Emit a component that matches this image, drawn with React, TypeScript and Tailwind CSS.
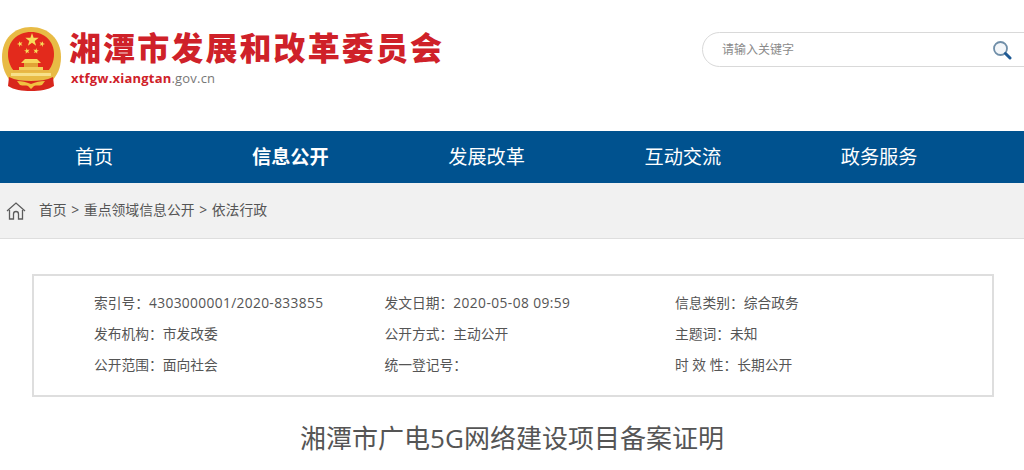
import React from 'react';

const font = { fontFamily: '"Open Sans", "Noto Sans CJK SC", sans-serif' };

// five pointed star as polygon points
function star(cx: number, cy: number, r: number, rot = 0) {
  const pts: string[] = [];
  for (let i = 0; i < 10; i++) {
    const rad = i % 2 === 0 ? r : r * 0.4;
    const a = ((i * 36 - 90 + rot) * Math.PI) / 180;
    pts.push(`${(cx + rad * Math.cos(a)).toFixed(1)},${(cy + rad * Math.sin(a)).toFixed(1)}`);
  }
  return pts.join(' ');
}

function Emblem() {
  return (
    <svg width="62" height="68" viewBox="0 0 62 68" className="shrink-0">
      <defs>
        <filter id="soft"><feGaussianBlur stdDeviation="0.5" /></filter>
      </defs>
      <g filter="url(#soft)">
        <path d="M31 2C14 2 2 14 2 32c0 11 4 19 9 25l40 0c6-6 10-14 10-25C61 14 48 2 31 2z" fill="#e8bb45" />
        <path d="M31 7C17 7 8 17 8 29c0 8 3 14 7 18h32c4-4 7-10 7-18C54 17 45 7 31 7z" fill="#e32a1b" />
        <polygon points={star(32, 15, 7)} fill="#f7dc5a" />
        <polygon points={star(20, 19, 3, -20)} fill="#f7dc5a" />
        <polygon points={star(42, 19, 3, 20)} fill="#f7dc5a" />
        <polygon points={star(27, 26, 3, -10)} fill="#f7dc5a" />
        <polygon points={star(36, 26, 3, 10)} fill="#f7dc5a" />
        <path d="M25 34h12l4 4H21z" fill="#f7d75c" />
        <rect x="24" y="38" width="14" height="4" fill="#e0a436" />
        <rect x="19" y="42" width="24" height="3" fill="#f2cf5a" />
        <rect x="13" y="45" width="36" height="2" fill="#e8b544" />
        <rect x="11" y="48" width="40" height="3" fill="#f7e08a" />
        <path d="M9 52c6 3 14 4 22 4s16-1 22-4l1 9c-6 4-14 5-23 5s-17-1-23-5z" fill="#d8261c" />
        <path d="M17 56c5 0 9 1 14 3 5-2 9-3 14-3l-3 4c-3 1-6 0-8 1l-3 3-3-3c-2-1-5 0-8-1z" fill="#f0c040" />
      </g>
    </svg>
  );
}

function SearchIcon() {
  return (
    <svg width="20" height="20" viewBox="0 0 20 20">
      <circle cx="8.5" cy="8.5" r="6.5" fill="#f3f6f9" stroke="#6f8ea8" strokeWidth="1.8" />
      <path d="M13.5 13.5l4.5 4.5" stroke="#1f5a94" strokeWidth="3" strokeLinecap="round" />
    </svg>
  );
}

function HomeIcon() {
  return (
    <svg width="20" height="20" viewBox="0 0 20 20" fill="none" stroke="#5c5c5c" strokeWidth="1.3">
      <path d="M1 10L10 2l9 8" />
      <path d="M3.5 9v9h4v-5a2.5 2.5 0 0 1 5 0v5h4V9" />
    </svg>
  );
}

const nav = ['首页', '信息公开', '发展改革', '互动交流', '政务服务'];

export default function App() {
  return (
    <div className="h-[470px] w-[1024px] overflow-hidden bg-white" style={font}>
      <header className="flex h-[131px] items-start justify-between">
        <div className="flex pt-[25px]">
          <Emblem />
          <div className="ml-[7px] pt-[4px]">
            <div className="text-[32px] leading-[38px] font-black tracking-[2.1px] whitespace-nowrap text-[#cf2129]">
              湘潭市发展和改革委员会
            </div>
            <div className="mt-[3px] pl-[2px] text-[13px] leading-[16px] font-bold tracking-[0.2px] text-[#cf2129]">
              xtfgw.xiangtan<span className="font-normal text-[#777]">.gov.cn</span>
            </div>
          </div>
        </div>
        <div className="mt-[32px] -mr-[20px] flex h-[35px] w-[342px] items-center justify-between rounded-full border border-[#d9d9d9] pr-[31px] pl-[19px]">
          <span className="text-xs text-[#8a8a8a]">请输入关键字</span>
          <SearchIcon />
        </div>
      </header>

      <nav className="-ml-[4px] flex h-[52px] items-center bg-[#00528f]">
        {nav.map((item, i) => (
          <div key={item} className={`w-[196.25px] shrink-0 text-center text-[19.2px] text-white ${i === 1 ? 'font-bold' : ''}`}>
            {item}
          </div>
        ))}
      </nav>

      <div className="flex h-[56px] items-center border-b border-[#dedede] bg-[#f1f1f1] pl-[6px] text-[13.85px] text-[#555]">
        <HomeIcon />
        <span className="ml-[13px]">
          首页 <span className="mx-[1px]">&gt;</span> 重点领域信息公开 <span className="mx-[1px]">&gt;</span> 依法行政
        </span>
      </div>

      <div className="mt-[35px] mr-[30px] ml-[32px] h-[123px] border-2 border-[#dedede] pt-[12px] pl-[60px] text-[13.75px] text-[#555]">
        <div className="grid h-[31px] grid-cols-[290.5px_290.5px_1fr] items-center whitespace-nowrap">
          <div>索引号：<span className="tracking-[0.35px]">4303000001/2020-833855</span></div>
          <div>发文日期：<span className="tracking-[0.42px]">2020-05-08 09:59</span></div>
          <div>信息类别：综合政务</div>
        </div>
        <div className="grid h-[31px] grid-cols-[290.5px_290.5px_1fr] items-center whitespace-nowrap">
          <div>发布机构：市发改委</div>
          <div>公开方式：主动公开</div>
          <div>主题词：未知</div>
        </div>
        <div className="grid h-[31px] grid-cols-[290.5px_290.5px_1fr] items-center whitespace-nowrap">
          <div>公开范围：面向社会</div>
          <div>统一登记号：</div>
          <div>时 效 性：长期公开</div>
        </div>
      </div>

      <h1 className="mt-[22px] text-center text-[26px] leading-[38px] font-normal text-[#555]">
        湘潭市广电5G网络建设项目备案证明
      </h1>
    </div>
  );
}
